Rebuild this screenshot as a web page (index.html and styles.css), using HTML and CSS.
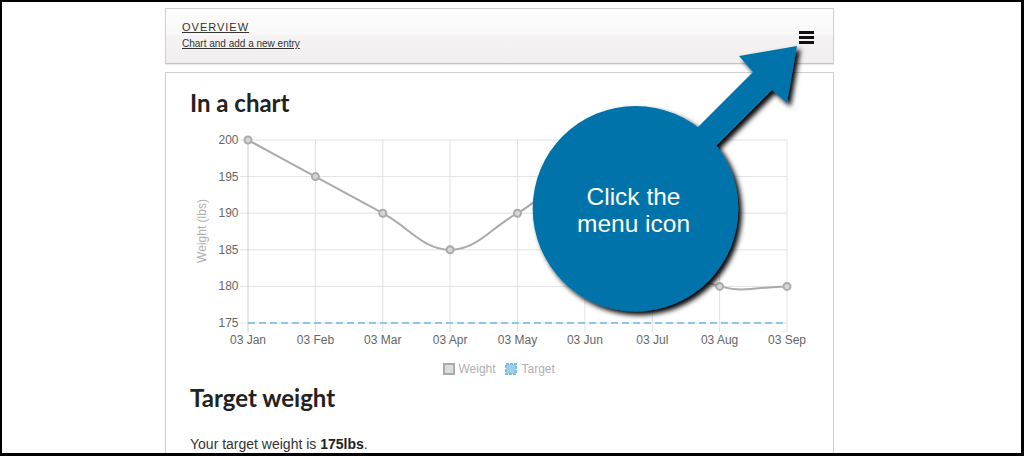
FILE: index.html
```html
<!DOCTYPE html>
<html lang="en">
<head>
<meta charset="utf-8">
<title>Overview</title>
<link rel="stylesheet" href="styles.css">
</head>
<body>
<div class="frame">
  <div class="column">
    <header class="topbar">
      <div class="titles">
        <a class="title" href="#">OVERVIEW</a>
        <a class="subtitle" href="#">Chart and add a new entry</a>
      </div>
      <div class="menu-icon" aria-label="Menu"><span></span><span></span><span></span></div>
    </header>
    <main class="panel">
      <h2 class="heading">In a chart</h2>
      <svg class="chart" width="640" height="262" viewBox="0 0 640 262">
        <g class="grid">
          <line x1="50" y1="22" x2="597" y2="22"/>
          <line x1="50" y1="58.6" x2="597" y2="58.6"/>
          <line x1="50" y1="95.2" x2="597" y2="95.2"/>
          <line x1="50" y1="131.8" x2="597" y2="131.8"/>
          <line x1="50" y1="168.4" x2="597" y2="168.4"/>
          <line x1="50" y1="205" x2="597" y2="205"/>
          <line x1="125.4" y1="22" x2="125.4" y2="214"/>
          <line x1="192.8" y1="22" x2="192.8" y2="214"/>
          <line x1="260.1" y1="22" x2="260.1" y2="214"/>
          <line x1="327.5" y1="22" x2="327.5" y2="214"/>
          <line x1="394.9" y1="22" x2="394.9" y2="214"/>
          <line x1="462.3" y1="22" x2="462.3" y2="214"/>
          <line x1="529.6" y1="22" x2="529.6" y2="214"/>
          <line x1="597" y1="22" x2="597" y2="214"/>
          <line class="axis" x1="58" y1="22" x2="58" y2="214"/>
        </g>
        <g class="ylabels">
          <text x="48.5" y="26">200</text>
          <text x="48.5" y="62.6">195</text>
          <text x="48.5" y="99.2">190</text>
          <text x="48.5" y="135.8">185</text>
          <text x="48.5" y="172.4">180</text>
          <text x="48.5" y="209">175</text>
        </g>
        <text class="ytitle" transform="translate(16,113) rotate(-90)">Weight (lbs)</text>
        <g class="xlabels">
          <text x="58" y="226">03 Jan</text>
          <text x="125.4" y="226">03 Feb</text>
          <text x="192.8" y="226">03 Mar</text>
          <text x="260.1" y="226">03 Apr</text>
          <text x="327.5" y="226">03 May</text>
          <text x="394.9" y="226">03 Jun</text>
          <text x="462.3" y="226">03 Jul</text>
          <text x="529.6" y="226">03 Aug</text>
          <text x="597" y="226">03 Sep</text>
        </g>
        <line class="target" x1="58" y1="205" x2="597" y2="205"/>
        <path class="weight" d="M58,22 C84.95,36.64 98.425,43.96 125.375,58.6 C152.325,73.24 165.8,80.56 192.75,95.2 C219.7,109.84 233.175,131.8 260.125,131.8 C287.075,131.8 300.55,109.84 327.5,95.2 C354.45,80.56 371.415,52.23 394.875,58.6 C425.315,66.87 431.81,107 462.25,131.8 C485.71,150.92 500.935,160.61 529.625,168.4 C554.835,175.25 570.05,168.4 597,168.4"/>
        <g class="points">
          <circle cx="58" cy="22" r="3.5"/>
          <circle cx="125.4" cy="58.6" r="3.5"/>
          <circle cx="192.8" cy="95.2" r="3.5"/>
          <circle cx="260.1" cy="131.8" r="3.5"/>
          <circle cx="327.5" cy="95.2" r="3.5"/>
          <circle cx="394.9" cy="58.6" r="3.5"/>
          <circle cx="462.3" cy="131.8" r="3.5"/>
          <circle cx="529.6" cy="168.4" r="3.5"/>
          <circle cx="597" cy="168.4" r="3.5"/>
        </g>
        <g class="legend">
          <rect class="lg-weight" x="254" y="246" width="10" height="10"/>
          <text x="268.5" y="254.5">Weight</text>
          <rect class="lg-target" x="316" y="246" width="10" height="10"/>
          <text x="331.5" y="254.5">Target</text>
        </g>
      </svg>
      <h2 class="heading second">Target weight</h2>
      <p class="note">Your target weight is <strong>175lbs</strong>.</p>
    </main>
  </div>
</div>
<svg class="overlay" width="1024" height="456" viewBox="0 0 1024 456" aria-hidden="true">
  <defs>
    <filter id="shadow" x="-20%" y="-20%" width="140%" height="140%">
      <feDropShadow dx="3.5" dy="3.5" stdDeviation="2.8" flood-color="#000" flood-opacity="1"/>
    </filter>
  </defs>
  <g filter="url(#shadow)" fill="#0073aa">
    <polygon points="797,46 739,56 753,72 640,185 660,202 772,90 787,103"/>
    <circle cx="635.5" cy="208.7" r="102.8"/>
  </g>
</svg>
<div class="callout-text">Click the<br>menu icon</div>
</body>
</html>
```

FILE: styles.css
```css
html, body {
  margin: 0;
  padding: 0;
  background: #fff;
}

body {
  font-family: "Liberation Sans", Arial, sans-serif;
  color: #333;
}

.frame {
  box-sizing: border-box;
  width: 1024px;
  height: 456px;
  border-style: solid;
  border-color: #000;
  border-width: 2px 3px 3px 2px;
  overflow: hidden;
  background: #fff;
}

.column {
  width: 669px;
  margin: 6px 0 0 163px;
}

.topbar {
  box-sizing: border-box;
  height: 56px;
  display: flex;
  justify-content: space-between;
  align-items: flex-start;
  padding: 12px 19px 0 16px;
  border: 1px solid #cfcfcf;
  border-bottom-color: #c4c4c4;
  background: linear-gradient(to bottom, #fdfcfc 0%, #faf9f9 45%, #f4f2f2 52%, #f1efef 100%);
  box-shadow: 0 1px 1px rgba(0, 0, 0, 0.08);
}

.titles {
  display: flex;
  flex-direction: column;
}

.title {
  font-size: 11px;
  line-height: 13px;
  letter-spacing: 1px;
  color: #333;
  text-decoration: underline;
}

.subtitle {
  margin-top: 4px;
  font-size: 10px;
  line-height: 12px;
  color: #333;
  text-decoration: underline;
}

.menu-icon {
  margin-top: 10px;
  width: 15px;
  display: flex;
  flex-direction: column;
  gap: 2.5px;
}

.menu-icon span {
  display: block;
  height: 2.5px;
  background: #111;
}

.panel {
  box-sizing: border-box;
  height: 400px;
  margin-top: 8px;
  padding: 15px 0 0 24px;
  border: 1px solid #cfcfcf;
  border-bottom: none;
  background: #fff;
}

.heading {
  margin: 0;
  font-family: Lato, "Open Sans", sans-serif;
  font-weight: 700;
  font-size: 24px;
  line-height: 30px;
  color: #222;
}

.heading.second {
  margin-top: 3px;
}

.chart {
  display: block;
  overflow: visible;
}

.chart text {
  font-family: "Liberation Sans", Arial, sans-serif;
  font-size: 12px;
  fill: #666;
}

.grid line {
  stroke: #e2e2e2;
  stroke-width: 1;
}

.grid line.axis {
  stroke: #cdcdcd;
}

.ylabels text {
  text-anchor: end;
}

.xlabels text {
  text-anchor: middle;
}

.chart .ytitle {
  text-anchor: middle;
  fill: #b0b0b0;
}

.target {
  stroke: #8cc7e6;
  stroke-width: 2;
  stroke-dasharray: 7 4;
}

.weight {
  fill: none;
  stroke: #ababab;
  stroke-width: 2;
}

.points circle {
  fill: #d6d6d6;
  stroke: #ababab;
  stroke-width: 2;
}

.legend .lg-weight {
  fill: #dcdcdc;
  stroke: #ababab;
  stroke-width: 2;
}

.legend .lg-target {
  fill: #9fcfe8;
  stroke: #7dbfe2;
  stroke-width: 2;
  stroke-dasharray: 3 1;
}

.chart .legend text {
  fill: #b0b0b0;
}

.note {
  margin: 21px 0 0;
  font-size: 14px;
  line-height: 20px;
  color: #333;
}

.note strong {
  font-weight: 700;
  color: #222;
}

.overlay {
  position: absolute;
  top: 0;
  left: 0;
  pointer-events: none;
}

.callout-text {
  position: absolute;
  top: 184px;
  left: 531px;
  width: 205px;
  text-align: center;
  font-family: "Liberation Sans", Arial, sans-serif;
  font-size: 24.5px;
  line-height: 26.5px;
  color: #fff;
}
```
